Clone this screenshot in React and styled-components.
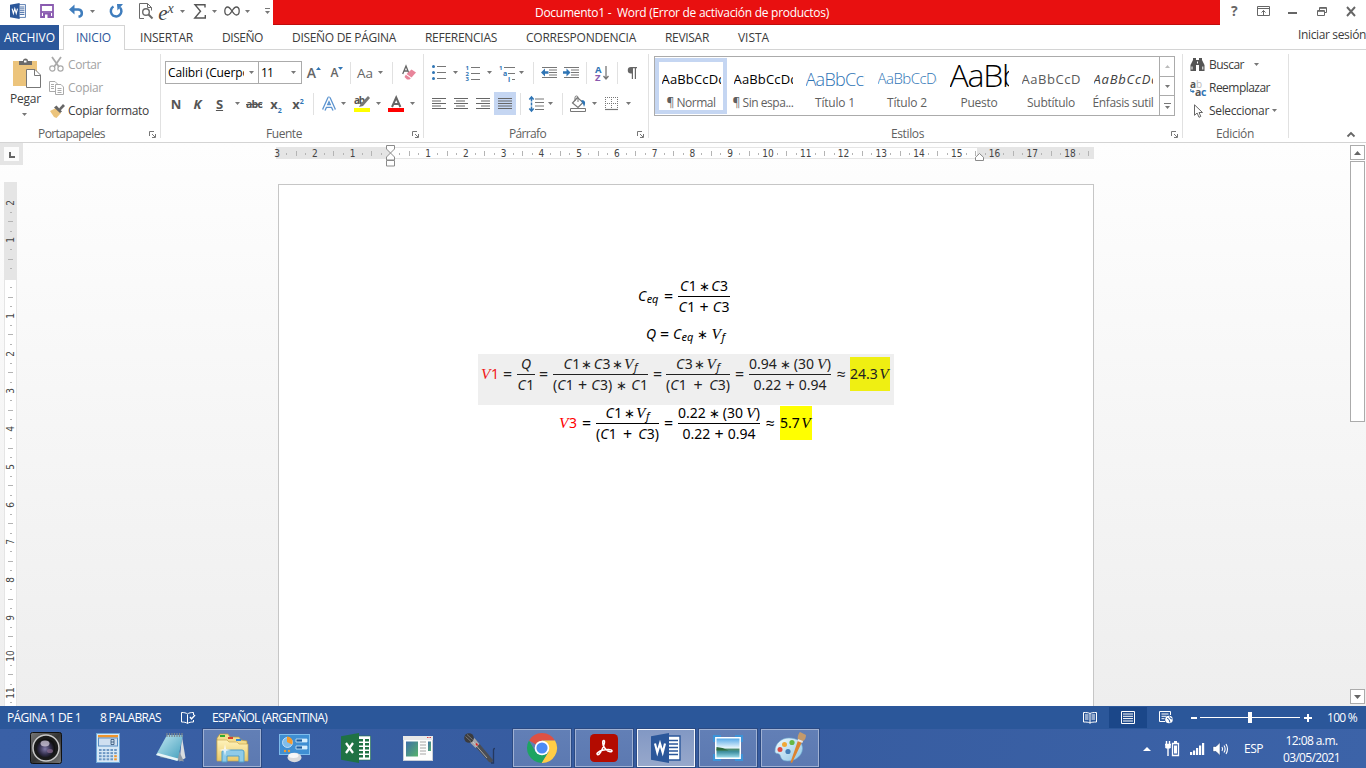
import React, { useLayoutEffect, useRef, useState } from "react";
import styled, { createGlobalStyle, css } from "styled-components";

const ui = `"Open Sans", "Noto Sans", sans-serif`;
const mathSerif = `"Liberation Serif", serif`;
const mathSans = `"Noto Sans", "Open Sans", sans-serif`;

const Global = createGlobalStyle`
  * { box-sizing: border-box; }
  body { margin: 0; background: #fff; font-family: ${ui}; font-size: 12px; color: #3c3c3c; overflow: hidden; }
  svg { display: block; flex: none; overflow: visible; }
`;

/* ---------- text that tracks itself to a given width ---------- */
const FitText = styled.span`
  display: block;
  flex: none;
  width: ${(p) => p.$w}px;
  white-space: pre;
  margin-left: ${(p) => p.$ml || 0}px;
  line-height: ${(p) => p.$lh || 16}px;
  color: ${(p) => p.$c || "inherit"};
  font-size: ${(p) => p.$s || 12}px;
  font-weight: ${(p) => p.$b || "inherit"};
`;
function Fit({ w, ml, lh, c, s, b, children }) {
  const ref = useRef(null);
  const [gap, setGap] = useState(0);
  const count = React.Children.toArray(children).join("").length;
  useLayoutEffect(() => {
    const natural = ref.current.getBoundingClientRect().width;
    setGap((w - natural) / count);
  }, [w, count]);
  return (
    <FitText $w={w} $ml={ml} $lh={lh} $c={c} $s={s} $b={b}>
      <span ref={ref} style={{ letterSpacing: gap }}>{children}</span>
    </FitText>
  );
}

/* ---------- shared small parts ---------- */
const Window = styled.div`
  width: 1366px;
  height: 768px;
  display: flex;
  flex-direction: column;
  overflow: hidden;
`;
const Cell = styled.div`
  flex: none;
  width: ${(p) => p.$w}px;
  height: ${(p) => p.$h || 23}px;
  margin-left: ${(p) => p.$ml || 0}px;
  background: ${(p) => (p.$on ? "#c5d6f2" : "transparent")};
  display: flex;
  align-items: center;
  justify-content: center;
`;
const VLine = styled.div`
  flex: none;
  width: 1px;
  height: 22px;
  margin-left: ${(p) => p.$ml || 0}px;
  background: #e1e1e1;
`;
const Caret = ({ c = "#777" }) => (
  <svg width="5" height="3" viewBox="0 0 5 3"><path d="M0 0h5L2.5 3z" fill={c} /></svg>
);
const Arrow = ({ w, ml }) => <Cell $w={w} $ml={ml}><Caret /></Cell>;

/* ---------- title bar ---------- */
const TitleBar = styled.header`
  height: 25px;
  display: flex;
  flex: none;
`;
const QuickAccess = styled.div`
  width: 273px;
  display: flex;
  align-items: center;
  padding: 0 0 3px 8px;
`;
const Caption = styled.div`
  width: 947px;
  background: #e81010;
  border-bottom: 1px solid #c00c0c;
  padding: 5px 0 0 262px;
`;
const Controls = styled.div`
  display: flex;
  align-items: center;
  padding-bottom: 3px;
`;

const WordMark = ({ size = 16 }) => (
  <svg width={size} height={size} viewBox="0 0 30 30">
    <path d="M16 3h13v24H16z" fill="#fff" stroke="#2b579a" strokeWidth="1.4" />
    <path d="M18 7.5h9M18 11h9M18 14.500h9M18 18h9M18 21.500h9" stroke="#2b579a" strokeWidth="1.6" />
    <path d="M0 3.300 18 0v30L0 26.700z" fill="#2b579a" />
    <path d="M4 10.500 6.300 19.500 9 10.500 11.700 19.500 14 10.500" fill="none" stroke="#fff" strokeWidth="2.100" />
  </svg>
);

function TopBar() {
  return (
    <TitleBar>
      <QuickAccess>
        <Cell $w={20}><WordMark /></Cell>
        <Cell $w={26} $ml={6}>
          <svg width="14" height="14" viewBox="0 0 14 14">
            <path d="M1 1h12v12H1z" fill="#fff" stroke="#8a5bb0" strokeWidth="1.800" />
            <path d="M1 8h12" fill="none" stroke="#8a5bb0" strokeWidth="1.800" />
            <path d="M3 9h8v4.500H3z" fill="#8a5bb0" /><path d="M5 10.500h2.500V14H5z" fill="#fff" />
          </svg>
        </Cell>
        <Cell $w={26} $ml={3}>
          <svg width="15" height="13" viewBox="0 0 15 13">
            <path d="M3 4.500h6.500a4 3.700 0 0 1 0 7.300" fill="none" stroke="#3f7dbd" strokeWidth="2.500" />
            <path d="M0 4.500 5.500-.5v10z" fill="#3f7dbd" />
          </svg>
        </Cell>
        <Arrow w={6} />
        <Cell $w={22} $ml={10}>
          <svg width="15" height="14" viewBox="0 0 15 14">
            <path d="M4.500 2.500A5.300 5.300 0 1 0 11 3.500" fill="none" stroke="#3f7dbd" strokeWidth="2.500" />
            <path d="M8 0h6L8.500 6.500z" fill="#3f7dbd" />
          </svg>
        </Cell>
        <Cell $w={18} $ml={10}>
          <svg width="14" height="16" viewBox="0 0 14 16" fill="none" stroke="#6a6a6a">
            <path d="M5 15.500H.5V.5h8l4 4v3M8.500.5v4h4" />
            <circle cx="7" cy="9" r="3.300" strokeWidth="1.400" /><path d="M9.500 11.500 13.500 15.500" strokeWidth="2" />
          </svg>
        </Cell>
        <Cell $w={22}><EulerText>e<sup>x</sup></EulerText></Cell>
        <Arrow w={6} ml={2} />
        <Cell $w={20} $ml={5}>
          <svg width="12" height="15" viewBox="0 0 12 15"><path d="M11 3.500V.8H1l5.500 6.500L.8 14h10.500v-3" fill="none" stroke="#555" strokeWidth="1.400" /></svg>
        </Cell>
        <Arrow w={6} ml={1} />
        <Cell $w={18} $ml={6}>
          <svg width="16" height="10" viewBox="0 0 16 10"><path d="M8 5C6 2 5 1 3.700 1 2 1 .8 2.700.8 5S2 9 3.700 9C5.500 9 6.500 7.500 8 5s2.500-4 4.300-4C14 1 15.200 2.700 15.200 5S14 9 12.300 9C11 9 10 8 8 5z" fill="none" stroke="#555" strokeWidth="1.300" /></svg>
        </Cell>
        <Arrow w={6} ml={3} />
        <Cell $w={12} $ml={11}>
          <svg width="5" height="6" viewBox="0 0 5 6"><path d="M0 .5h5" stroke="#777" /><path d="M0 3h5L2.500 6z" fill="#777" /></svg>
        </Cell>
      </QuickAccess>
      <Caption><Fit w={294} c="#fff">Documento1 -  Word (Error de activación de productos)</Fit></Caption>
      <Controls>
        <Cell $w={29}><Fit w={7} s={14} b={700} c="#666">?</Fit></Cell>
        <Cell $w={29}>
          <svg width="13" height="10" viewBox="0 0 13 10" fill="none" stroke="#666"><path d="M.5.500h12v9H.5zM.5 2.500h12M6.500 9V4.500M4.500 6.500l2-2 2 2" /></svg>
        </Cell>
        <Cell $w={29}><svg width="9" height="10"><path d="M0 7h9" stroke="#666" strokeWidth="2" /></svg></Cell>
        <Cell $w={29}>
          <svg width="10" height="9" viewBox="0 0 10 9" fill="none" stroke="#666"><path d="M2.500 3V.500h7v5H7.500M.5 3.500h7v5H.5zM2.500 1.300h7M.5 4.300h7" /></svg>
        </Cell>
        <Cell $w={29}><svg width="10" height="9" viewBox="0 0 10 9"><path d="M1 0l8 9M9 0 1 9" stroke="#666" strokeWidth="1.900" /></svg></Cell>
      </Controls>
    </TitleBar>
  );
}
const EulerText = styled.span`
  font: italic 21px/22px ${mathSerif};
  color: #444;
  padding-top: 4px;
  sup { font-size: 14px; line-height: 0; vertical-align: 7px; }
`;

/* ---------- tabs ---------- */
const TabBar = styled.nav`
  height: 25px;
  flex: none;
  display: flex;
  border-bottom: 1px solid #d4d4d4;
`;
const FileTab = styled.div`
  width: 59px;
  height: 25px;
  padding: 5px 0 0 4px;
  background: #2b579a;
`;
const ActiveTab = styled.div`
  width: 62px;
  height: 25px;
  margin: 0 15px 0 4px;
  padding: 4px 0 0 12px;
  border: 1px solid #d4d4d4;
  border-bottom: 0;
  background: #fff;
`;
const Tabs = styled.div`
  display: flex;
  gap: 29px;
  padding-top: 5px;
`;
const SignIn = styled.div`
  margin-left: auto;
  padding-top: 2px;
`;

/* ---------- ribbon ---------- */
const Ribbon = styled.section`
  height: 93px;
  flex: none;
  display: flex;
  border-bottom: 1px solid #d4d4d4;
`;
const Group = styled.div`
  width: ${(p) => p.$w}px;
  flex: none;
  display: flex;
  flex-direction: column;
`;
const GroupSep = styled.div`
  width: 1px;
  height: 84px;
  margin-top: 4px;
  background: #e1e1e1;
`;
const GroupBody = styled.div`
  height: 74px;
  display: flex;
  flex-direction: ${(p) => (p.$col ? "column" : "row")};
`;
const GroupFoot = styled.div`
  display: flex;
  height: 18px;
  align-items: center;
  justify-content: space-between;
  padding: 2px 4px 0 ${(p) => p.$pl}px;
  color: #5f5f5f;
`;
const Launcher = () => (
  <svg width="7" height="7" viewBox="0 0 7 7" fill="none" stroke="#777"><path d="M.5 5V.5H5M3 3l3 3M6.500 3v3.500H3" /></svg>
);
const Row = styled.div`
  display: flex;
  align-items: center;
  height: 23px;
  margin-top: ${(p) => p.$mt || 0}px;
  padding-left: ${(p) => p.$pl || 0}px;
`;
const Paste = styled.div`
  width: 49px;
  padding: 7px 0 0 10px;
`;
const PasteIcon = styled.div`
  padding: 0 0 3px 2px;
`;
const PasteCaret = styled.div`
  padding: 6px 0 0 12px;
`;
const Commands = styled.div`
  padding-top: ${(p) => p.$pt || 3}px;
`;
const Combo = styled.div`
  width: ${(p) => p.$w}px;
  height: 23px;
  margin-left: ${(p) => p.$ml || 0}px;
  border: 1px solid #ababab;
  display: flex;
  align-items: center;
  padding-left: 2px;
  color: #000;
  flex: none;
`;
const ComboClip = styled.div`
  width: ${(p) => p.$w}px;
  overflow: hidden;
`;
const Glyph = styled.span`
  font-weight: 700;
  font-size: ${(p) => p.$s || 13}px;
  line-height: 16px;
  color: #555;
  font-style: ${(p) => (p.$i ? "italic" : "normal")};
  text-decoration: ${(p) => p.$d || "none"};
  letter-spacing: ${(p) => p.$ls || 0}px;
  sub, sup { font-size: 7px; line-height: 0; color: #2f75b5; }
`;
const Letter = styled.span`
  font-size: ${(p) => p.$s}px;
  line-height: 16px;
  font-weight: 600;
  color: #666;
`;

const paraLines = { left: [14, 9, 14, 9, 14], mid: [14, 9, 14, 9, 14], right: [14, 9, 14, 9, 14], full: [14, 14, 14, 14, 14] };
const AlignIcon = ({ kind }) => (
  <svg width="14" height="11" viewBox="0 0 14 11" fill="#666">
    {paraLines[kind].map((w, i) => (
      <rect key={i} x={kind === "right" ? 14 - w : kind === "mid" ? Math.floor((14 - w) / 2) : 0} y={i * 2.5} width={w} height="1" />
    ))}
  </svg>
);
const svgText = { fontFamily: "Open Sans", fontWeight: 700, fill: "#2f75b5" };

function Clipboard() {
  return (
    <Group $w={160}>
      <GroupBody>
        <Paste>
          <PasteIcon>
            <svg width="29" height="31" viewBox="0 0 29 31">
              <path d="M1 4h24v25H1z" fill="#ecc47c" />
              <path d="M7 8V4h4a2.500 2.500 0 0 1 5 0h4v4z" fill="#6b6b6b" /><path d="M12 3.500h2.500v2H12z" fill="#fff" />
              <path d="M14.500 12.500h8.500l5.500 5.500v12.500h-14z" fill="#fff" stroke="#777" /><path d="M22.500 12.500v6h6" fill="none" stroke="#777" />
            </svg>
          </PasteIcon>
          <Fit w={31}>Pegar</Fit>
          <PasteCaret><Caret /></PasteCaret>
        </Paste>
        <Commands>
          <Row>
            <svg width="15" height="15" viewBox="0 0 15 15" fill="none" stroke="#aaa"><path d="M3 0 10 10M12 0 5 10" strokeWidth="1.800" /><circle cx="3.300" cy="11.500" r="2.600" strokeWidth="1.200" /><circle cx="11.500" cy="11.500" r="2.600" strokeWidth="1.200" /></svg>
            <Fit w={33} ml={4} c="#a3a3a3">Cortar</Fit>
          </Row>
          <Row>
            <svg width="15" height="14" viewBox="0 0 15 14" fill="#fff" stroke="#aaa"><path d="M.5.500H6L8.500 3v7.500h-8z" /><path d="M2 3.500h3M2 5.500h3M2 7.500h3" /><path d="M6.500 3.500H12L14.500 6v7.500h-8z" /><path d="M8.500 7.500h4M8.500 9.500h4M8.500 11.500h4" /></svg>
            <Fit w={35} ml={4} c="#a3a3a3">Copiar</Fit>
          </Row>
          <Row>
            <svg width="16" height="14" viewBox="0 0 16 14"><path d="M1 7 7 4l5 5-4.500 5L5 13z" fill="#ecc47c" /><path d="M5 3.500 7.500 1.500 13 7.500 11 9z" fill="#666" /><path d="M10 4.500 14 0l2 2-4.500 4.500z" fill="#666" /></svg>
            <Fit w={81} ml={3}>Copiar formato</Fit>
          </Row>
        </Commands>
      </GroupBody>
      <GroupFoot $pl={38}><Fit w={67}>Portapapeles</Fit><Launcher /></GroupFoot>
    </Group>
  );
}

function FontGroup() {
  return (
    <Group $w={262}>
      <GroupBody $col>
        <Row $mt={11} $pl={4}>
          <Combo $w={94}><ComboClip $w={77}><Fit w={85}>Calibri (Cuerpo)</Fit></ComboClip><Arrow w={14} /></Combo>
          <Combo $w={44} $ml={-1}><ComboClip $w={25}><Fit w={12}>11</Fit></ComboClip><Arrow w={16} /></Combo>
          <Cell $w={24}><Letter $s={14}>A</Letter><svg width="5" height="12"><path d="M0 3h5L2.500 0z" fill="#2f75b5" /></svg></Cell>
          <Cell $w={22}><Letter $s={12}>A</Letter><svg width="5" height="12"><path d="M0 0h5L2.500 3z" fill="#2f75b5" /></svg></Cell>
          <VLine $ml={2} />
          <Cell $w={22} $ml={3}><Fit w={16} s={13.5} c="#666">Aa</Fit></Cell>
          <Arrow w={9} />
          <VLine $ml={7} />
          <Cell $w={24} $ml={4}>
            <svg width="14" height="15" viewBox="0 0 14 15">
              <path d="M.7 9 4 1l3.200 8M2 6h4.300" fill="none" stroke="#666" strokeWidth="1.300" />
              <path d="M9.500 4.500 14 7.500 9.500 12.500 4.500 9z" fill="#e8849a" /><path d="M3.800 9.800 8.800 13.200 7.500 14.500H5L2.500 12z" fill="#e8849a" />
            </svg>
          </Cell>
        </Row>
        <Row $mt={8} $pl={4}>
          <Cell $w={22}><Glyph>N</Glyph></Cell>
          <Cell $w={21}><Glyph $i>K</Glyph></Cell>
          <Cell $w={23}><Glyph $d="underline">S</Glyph></Cell>
          <Arrow w={12} />
          <Cell $w={22}><Glyph $s={10.5} $d="line-through" $ls={-0.8}>abc</Glyph></Cell>
          <Cell $w={22}><Glyph>x<sub>2</sub></Glyph></Cell>
          <Cell $w={22}><Glyph>x<sup>2</sup></Glyph></Cell>
          <VLine $ml={4} />
          <Cell $w={22} $ml={4}>
            <svg width="14" height="14" viewBox="0 0 14 14"><path d="M1.800 13 7 1.500 12.200 13M4 9h6" fill="none" stroke="#5b93cf" strokeWidth="4" strokeLinejoin="round" /><path d="M1.800 13 7 1.500 12.200 13M4 9h6" fill="none" stroke="#fff" strokeWidth="1.400" /></svg>
          </Cell>
          <Arrow w={7} />
          <Cell $w={22} $ml={4}>
            <svg width="16" height="16" viewBox="0 0 16 16"><text x="0" y="8" fontSize="10" style={{ ...svgText, fill: "#555" }} textLength="11">ab</text><path d="M0 12h16v4H0z" fill="#ff0" /><path d="M14 0l2 2-7 8-4 1 1.500-3z" fill="#777" /></svg>
          </Cell>
          <Arrow w={11} />
          <Cell $w={24}>
            <svg width="16" height="16" viewBox="0 0 16 16"><path d="M4 11 8.200 1.500 12.400 11M5.500 8h5.500" fill="none" stroke="#666" strokeWidth="2" /><path d="M0 12h16v4H0z" fill="#f00" /></svg>
          </Cell>
          <Arrow w={9} />
        </Row>
      </GroupBody>
      <GroupFoot $pl={105}><Fit w={36}>Fuente</Fit><Launcher /></GroupFoot>
    </Group>
  );
}

const IndentIcon = ({ right }) => (
  <svg width="16" height="11" viewBox="0 0 16 11">
    <path d="M1 .5h15M8 3h8M8 5.500h8M8 8h8M1 10.500h15" stroke="#777" />
    {right ? <path d="M7.500 5.500 3.500 1.500v2.800H0v2.400h3.500v2.800z" fill="#2f75b5" /> : <path d="M0 5.500 4 1.500v2.800h3.500v2.400H4v2.800z" fill="#2f75b5" />}
  </svg>
);

function Paragraph() {
  return (
    <Group $w={224}>
      <GroupBody $col>
        <Row $mt={11} $pl={4}>
          <Cell $w={21}>
            <svg width="14" height="15" viewBox="0 0 14 15"><path d="M5 1.500h9M5 7.500h9M5 13.500h9" stroke="#777" /><circle cx="1.500" cy="1.500" r="1.500" fill="#2f75b5" /><circle cx="1.500" cy="7.500" r="1.500" fill="#2f75b5" /><circle cx="1.500" cy="13.500" r="1.500" fill="#2f75b5" /></svg>
          </Cell>
          <Arrow w={12} />
          <Cell $w={24}>
            <svg width="14" height="16" viewBox="0 0 14 16"><path d="M5 2.500h9M5 8.500h9M5 14.500h9" stroke="#777" /><text x="-.5" y="5" fontSize="6" style={svgText}>1</text><text x="-.5" y="10.500" fontSize="6" style={svgText}>2</text><text x="-.5" y="16" fontSize="6" style={svgText}>3</text></svg>
          </Cell>
          <Arrow w={9} />
          <Cell $w={25}>
            <svg width="16" height="16" viewBox="0 0 16 16"><path d="M5 2.500h11M9 8.500h7M13 14.500h3" stroke="#777" /><text x="0" y="5" fontSize="6" style={svgText}>1</text><text x="4" y="10.500" fontSize="7" style={svgText}>a</text><text x="9" y="16.500" fontSize="7" style={svgText}>i</text></svg>
          </Cell>
          <Arrow w={5} />
          <VLine $ml={9} />
          <Cell $w={22} $ml={4}><IndentIcon /></Cell>
          <Cell $w={22}><IndentIcon right /></Cell>
          <VLine $ml={4} />
          <Cell $w={22} $ml={4}>
            <svg width="14" height="16" viewBox="0 0 14 16"><text x="0" y="7.500" fontSize="9.500" style={svgText}>A</text><text x="0" y="16" fontSize="9.500" style={{ ...svgText, fill: "#8a5bb0" }}>Z</text><path d="M11 1v13M8.500 11l2.500 3 2.500-3" fill="none" stroke="#777" strokeWidth="1.300" /></svg>
          </Cell>
          <VLine $ml={4} />
          <Cell $w={22} $ml={3}>
            <svg width="10" height="12" viewBox="0 0 10 12"><path d="M4 0h6v1.200H9V12H7.800V1.200H6V12H4.800V6.500H4A3.200 3.200 0 0 1 4 0z" fill="#666" /></svg>
          </Cell>
        </Row>
        <Row $mt={8} $pl={4}>
          <Cell $w={22}><AlignIcon kind="left" /></Cell>
          <Cell $w={22}><AlignIcon kind="mid" /></Cell>
          <Cell $w={22}><AlignIcon kind="right" /></Cell>
          <Cell $w={22} $on><AlignIcon kind="full" /></Cell>
          <VLine $ml={4} />
          <Cell $w={22} $ml={4}>
            <svg width="15" height="16" viewBox="0 0 15 16"><path d="M6 3h9M6 6.500h9M6 10h9M6 13.500h9" stroke="#777" /><path d="M2.500 1v4.500M2.500 10.500V15M.3 3.500 2.500 1l2.200 2.500M.3 12.500 2.500 15l2.200-2.500M2.500 6.500v3" fill="none" stroke="#2f75b5" strokeWidth="1.500" /></svg>
          </Cell>
          <Arrow w={7} />
          <VLine $ml={8} />
          <Cell $w={22} $ml={4}>
            <svg width="16" height="16" viewBox="0 0 16 16" fill="none" stroke="#777"><path d="M7.500 1.500 2.500 7 8 11.500 13 6.500z" fill="#fff" strokeWidth="1.200" /><path d="M5 5V1.500A1.500 1.500 0 0 1 8 1.500V6" /><path d="M11.500 4c4 0 4.500 3 2.500 7-.5-2-1-4-2.500-5z" fill="#2f75b5" stroke="none" /><path d="M.5 12.500h15v3H.5z" fill="#fff" /></svg>
          </Cell>
          <Arrow w={11} />
          <Cell $w={22}>
            <svg width="13" height="13" viewBox="0 0 13 13" fill="none" stroke="#777"><path d="M.5 0v12M6.500 0v12M12.500 0v12M0 .5h13M0 6.500h13" strokeDasharray="1 1" /><path d="M0 12.500h13" strokeWidth="1.200" /></svg>
          </Cell>
          <Arrow w={13} />
        </Row>
      </GroupBody>
      <GroupFoot $pl={85}><Fit w={37}>Párrafo</Fit><Launcher /></GroupFoot>
    </Group>
  );
}

const Gallery = styled.div`
  display: flex;
  width: 521px;
  height: 60px;
  margin: 6px 0 0 5px;
  border: 1px solid #ababab;
`;
const StyleTile = styled.div`
  width: 72px;
  height: 56px;
  margin-top: 1px;
  flex: none;
  border: 4px solid ${(p) => (p.$on ? "#c5d6f2" : "transparent")};
  padding: 0 2px;
  display: flex;
  flex-direction: column;
  align-items: center;
`;
const Sample = styled.div`
  width: 59px;
  height: 31px;
  margin-top: 2px;
  overflow: hidden;
  display: flex;
  align-items: flex-start;
  padding-top: ${(p) => p.$pt}px;
  font-style: ${(p) => (p.$i ? "italic" : "normal")};
  flex: none;
`;
const GalleryScroll = styled.div`
  width: 15px;
  border-left: 1px solid #ababab;
  display: flex;
  flex-direction: column;
`;
const ScrollStep = styled.div`
  flex: 1;
  display: flex;
  align-items: center;
  justify-content: center;
  & + & { border-top: 1px solid #ababab; }
`;
const styleList = [
  { name: "¶ Normal", nw: 49, w: 65, s: 13, c: "#000", pt: 7, on: true },
  { name: "¶ Sin espa...", nw: 61, w: 65, s: 13, c: "#000", pt: 7 },
  { name: "Título 1", nw: 40, w: 80, s: 18, c: "#2e74b5", pt: 7, b: 300 },
  { name: "Título 2", nw: 40, w: 67, s: 15, c: "#2e74b5", pt: 6, b: 300 },
  { name: "Puesto", nw: 37, w: 142, s: 32, c: "#000", pt: 3, b: 300 },
  { name: "Subtítulo", nw: 48, w: 68, s: 13, c: "#5a5a5a", pt: 7 },
  { name: "Énfasis sutil", nw: 61, w: 66, s: 13, c: "#404040", pt: 7, i: true },
];

function Styles() {
  return (
    <Group $w={533}>
      <GroupBody>
        <Gallery>
          {styleList.map((t) => (
            <StyleTile key={t.name} $on={t.on}>
              <Sample $pt={t.pt} $i={t.i}><Fit w={t.w} s={t.s} c={t.c} b={t.b}>AaBbCcDd</Fit></Sample>
              <Fit w={t.nw} c="#5f5f5f">{t.name}</Fit>
            </StyleTile>
          ))}
          <GalleryScroll>
            <ScrollStep><svg width="5" height="3"><path d="M0 3h5L2.500 0z" fill="#bbb" /></svg></ScrollStep>
            <ScrollStep><Caret /></ScrollStep>
            <ScrollStep><svg width="7" height="6"><path d="M0 .5h7" stroke="#777" /><path d="M1 3h5L3.500 6z" fill="#777" /></svg></ScrollStep>
          </GalleryScroll>
        </Gallery>
      </GroupBody>
      <GroupFoot $pl={242}><Fit w={33}>Estilos</Fit><Launcher /></GroupFoot>
    </Group>
  );
}

function Editing() {
  return (
    <Group $w={105}>
      <GroupBody>
        <Commands>
          <Row $pl={7}>
            <svg width="15" height="13" viewBox="0 0 15 13" fill="#555"><path d="M3 0h3v2h3V0h3v2l2.500 5v6H9V7H6v6H.5V7L3 2z" /><path d="M2 8.500v3M12.800 8.500v3M7.500 3.500v2" stroke="#fff" /></svg>
            <Fit w={35} ml={4}>Buscar</Fit><Arrow w={5} ml={10} />
          </Row>
          <Row $pl={7}>
            <svg width="16" height="16" viewBox="0 0 16 16"><text x="0" y="7.500" fontSize="10" style={{ ...svgText, fill: "#555" }}>a</text><text x="6" y="7.500" fontSize="10" style={{ ...svgText, fill: "#bbb", fontWeight: 400 }}>b</text><text x="5" y="15.500" fontSize="10.500" style={{ ...svgText, fill: "#555" }}>a</text><text x="11" y="15.500" fontSize="10.500" style={svgText}>c</text><path d="M.8 9v2.500H4M2.500 10 4 11.500 2.500 13" fill="none" stroke="#2f75b5" /></svg>
            <Fit w={61} ml={3}>Reemplazar</Fit>
          </Row>
          <Row $pl={11}>
            <svg width="9" height="14" viewBox="0 0 9 14"><path d="M.5.8v10.500l2.600-2.300L5 13.300l1.800-.9L5 8.500h3.500z" fill="#fff" stroke="#666" /></svg>
            <Fit w={60} ml={6}>Seleccionar</Fit><Arrow w={5} ml={3} />
          </Row>
        </Commands>
      </GroupBody>
      <GroupFoot $pl={33}><Fit w={38}>Edición</Fit></GroupFoot>
    </Group>
  );
}
const Collapse = styled.div`
  margin-left: auto;
  width: 19px;
  padding-top: 82px;
`;

/* ---------- document area ---------- */
const Work = styled.main`
  height: 563px;
  flex: none;
  display: flex;
  background: linear-gradient(#fefefe, #eeeeee);
`;
const LeftRail = styled.div`
  width: 276px;
  flex: none;
`;
const TabCorner = styled.div`
  width: 23px;
  height: 22px;
  background: #e5e5e5;
  padding: 4px;
`;
const TabType = styled.div`
  width: 15px;
  height: 14px;
  background: #fcfcfc;
  padding: 5px 0 0 5px;
`;
const VRuler = styled.div`
  width: 13px;
  height: 524px;
  margin: 17px 0 0 4px;
  padding-top: 16px;
  border: solid #e5e5e5;
  border-width: 0 1px;
  background: linear-gradient(#e5e5e5 98px, #fff 98px);
  overflow: hidden;
`;
const rulerFont = `"DejaVu Sans Condensed", "DejaVu Sans", sans-serif`;
const VMark = styled.div`
  height: 9.45px;
  display: flex;
  align-items: center;
  justify-content: center;
  font: 10px/10px ${rulerFont};
  color: #444;
  span { transform: rotate(-90deg); }
`;
const Tick = styled.i`
  background: #b4b4b4;
  ${(p) => p.$v
    ? css`width: ${p.$long ? 5 : 2}px; height: 1px;`
    : css`width: 1px; height: ${p.$long ? 5 : 2}px;`}
`;
const Center = styled.div`
  width: 1074px;
  padding-top: 4px;
  flex: none;
`;
const HRuler = styled.div`
  width: 818px;
  height: 12px;
  position: relative;
  border: solid #e5e5e5;
  border-width: 1px 0;
  background: linear-gradient(90deg, #e5e5e5 114px, #fff 114px, #fff 701px, #e5e5e5 701px);
`;
const HMarks = styled.div`
  display: flex;
  margin-left: -3.500px;
`;
const HMark = styled.div`
  width: 9.45px;
  height: 11px;
  flex: none;
  display: flex;
  align-items: center;
  justify-content: center;
  font: 10px/11px ${rulerFont};
  color: #444;
`;
const Marker = styled.div`
  position: absolute;
  left: ${(p) => p.$x}px;
  top: ${(p) => p.$y}px;
`;
const Page = styled.article`
  width: 816px;
  height: 522px;
  margin: 25px 0 0 2px;
  border: 1px solid #c6c6c6;
  border-bottom: 0;
  background: #fff;
  display: flex;
  flex-direction: column;
  padding-top: 92px;
`;
const ScrollBar = styled.div`
  width: 15px;
  padding-top: 2px;
  display: flex;
  flex-direction: column;
`;
const ScrollBtn = styled.div`
  height: 15px;
  border: 1px solid #ababab;
  background: #fff;
  display: flex;
  align-items: center;
  justify-content: center;
`;
const Thumb = styled.div`
  height: 261px;
  margin: 1px 0 267px;
  border: 1px solid #ababab;
  background: #fff;
`;

/* equations */
const Eq = styled.div`
  display: flex;
  align-items: flex-start;
  flex: none;
  height: ${(p) => p.$h}px;
  margin: ${(p) => p.$mt || 0}px 0 0 ${(p) => p.$ml}px;
  padding: ${(p) => p.$pt || 0}px 0 0 ${(p) => p.$pl || 0}px;
  width: ${(p) => p.$w}px;
  background: ${(p) => (p.$shade ? "#efefef" : "transparent")};
  font-family: ${mathSans};
  color: ${(p) => (p.$shade ? "#222" : "#000")};
`;
const Term = styled.div`
  margin: ${(p) => (p.$flat ? 0 : 10)}px 0 0 ${(p) => p.$ml || 0}px;
`;
const Frac = styled.div`
  width: ${(p) => p.$w}px;
  margin-left: ${(p) => p.$ml}px;
  flex: none;
  display: flex;
  flex-direction: column;
  align-items: center;
`;
const Bar = styled.div`
  width: 100%;
  height: 1px;
  margin: 1px 0;
  background: currentColor;
`;
const Mark = styled.div`
  width: ${(p) => p.$w}px;
  height: 34px;
  margin: ${(p) => p.$mt}px 0 0 ${(p) => p.$ml}px;
  padding-top: 8px;
  background: ${(p) => p.$bg};
`;
const Line = styled.div`
  width: ${(p) => p.$w}px;
  height: 18px;
  display: flex;
  white-space: pre;
  font-size: 14px;
  line-height: 18px;
  color: ${(p) => p.$c || "inherit"};
`;
const Var = styled.i`
  font-style: italic;
  letter-spacing: ${(p) => (p.$tight ? 0 : 0.4)}px;
  font-family: ${(p) => (p.$serif ? mathSerif : "inherit")};
  font-size: ${(p) => (p.$serif ? 15.5 : 14)}px;
`;
const Sub = styled.i`
  font-size: 11px;
  line-height: 24px;
`;
const Op = styled.span`
  margin: 0 auto;
  font-size: ${(p) => (p.$star ? 13 : 16)}px;
`;
const Gap = styled.span`
  width: 3px;
`;
/* letters become italic, operators take up the slack, "_xx" is a subscript */
const tokens = (src) => src.match(/_[a-z]+|\s+|[\d.()]+|[^\s_]/g) || [];
function M({ w, c, children }) {
  return (
    <Line $w={w} $c={c}>
      {tokens(children).map((t, i) => {
        if (t[0] === "_") return <Sub key={i}>{t.slice(1)}</Sub>;
        if (/^\s+$/.test(t)) return <Gap key={i} />;
        if (/[=+∗≈]/.test(t)) return <Op key={i} $star={t === "∗"}>{t}</Op>;
        return /[A-Za-z]/.test(t) ? <Var key={i} $serif={t === "V"}>{t}</Var> : <span key={i}>{t}</span>;
      })}
    </Line>
  );
}
const F = ({ w, ml = 4, n, nw, d, dw }) => (
  <Frac $w={w} $ml={ml}><M w={nw}>{n}</M><Bar /><M w={dw || w}>{d}</M></Frac>
);
const T = ({ w, ml, c, flat, children }) => <Term $ml={ml} $flat={flat}><M w={w} c={c}>{children}</M></Term>;

const hSteps = Array.from({ length: 87 }, (_, i) => i - 12);
const vSteps = Array.from({ length: 54 }, (_, i) => i - 8);

function Document() {
  return (
    <Work>
      <LeftRail>
        <TabCorner><TabType><svg width="6" height="6"><path d="M1 0v5h5" fill="none" stroke="#666" strokeWidth="2" /></svg></TabType></TabCorner>
        <VRuler>
          {vSteps.map((n) => (
            <VMark key={n}>{n === 0 ? null : n % 4 === 0 ? <span>{Math.abs(n / 4)}</span> : <Tick $v $long={n % 2 === 0} />}</VMark>
          ))}
        </VRuler>
      </LeftRail>
      <Center>
        <HRuler>
          <HMarks>
            {hSteps.map((n) => (
              <HMark key={n}>{n === 0 ? null : n % 4 === 0 ? <span>{Math.abs(n / 4)}</span> : <Tick $long={n % 2 === 0} />}</HMark>
            ))}
          </HMarks>
          <Marker $x={110} $y={-3}>
            <svg width="9" height="22" viewBox="0 0 9 22" fill="#fff" stroke="#8a8a8a"><path d="M.5.500h8V4L4.500 8 .5 4z" /><path d="M4.500 8 8.500 12v3h-8v-3z" /><path d="M.5 15.500h8v5.500h-8z" /></svg>
          </Marker>
          <Marker $x={699} $y={5}>
            <svg width="9" height="8" viewBox="0 0 9 8"><path d="M4.500.500 8.500 4.300V7.500h-8V4.300z" fill="#fff" stroke="#8a8a8a" /></svg>
          </Marker>
        </HRuler>
        <Page>
          <Eq $h={46} $ml={359} $w={94}>
            <T w={22}>C_eq</T><T w={11} ml={3}>=</T><F w={52} nw={48} n="C1∗C3" d="C1+C3" dw={51} />
          </Eq>
          <Eq $h={30} $mt={2} $ml={367} $w={82}><T flat w={79}>Q=C_eq∗V_f</T></Eq>
          <Eq $h={51} $mt={-1} $ml={199} $w={416} $pt={1} $pl={3} $shade>
            <T w={17} c="#f01818">V1</T><T w={11} ml={4}>=</T>
            <F w={18} ml={4} nw={10} n="Q" d="C1" dw={17} /><T w={11} ml={3}>=</T>
            <F w={95} nw={74} n="C1∗C3∗V_f" d="(C1+C3)∗C1" /><T w={11} ml={4}>=</T>
            <F w={64} ml={3} nw={44} n="C3∗V_f" d="(C1+C3)" /><T w={11} ml={4}>=</T>
            <F w={82} nw={82} n="0.94∗(30 V)" d="0.22+0.94" dw={73} /><T w={10} ml={5}>≈</T>
            <Mark $w={40} $ml={4} $mt={2} $bg="#efef12"><M w={39}>24.3 V</M></Mark>
          </Eq>
          <Eq $h={40} $mt={-1} $ml={280} $w={260}>
            <T w={17} c="#f00">V3</T><T w={11} ml={5}>=</T>
            <F w={63} nw={44} n="C1∗V_f" d="(C1+C3)" /><T w={11} ml={4}>=</T>
            <F w={82} nw={82} n="0.22∗(30 V)" d="0.22+0.94" dw={73} /><T w={10} ml={5}>≈</T>
            <Mark $w={32} $ml={5} $mt={2} $bg="#ff0"><M w={31}>5.7 V</M></Mark>
          </Eq>
        </Page>
      </Center>
      <ScrollBar>
        <ScrollBtn><svg width="7" height="4"><path d="M0 4h7L3.500 0z" fill="#666" /></svg></ScrollBtn>
        <Thumb />
        <ScrollBtn><svg width="7" height="4"><path d="M0 0h7L3.500 4z" fill="#666" /></svg></ScrollBtn>
      </ScrollBar>
    </Work>
  );
}

/* ---------- status bar ---------- */
const Status = styled.footer`
  height: 23px;
  flex: none;
  display: flex;
  align-items: center;
  padding: 0 9px 0 7px;
  background: #2b579a;
  color: #fff;
`;
const Push = styled.div`
  margin-left: auto;
  display: flex;
  align-items: center;
`;
const ViewBtn = styled.div`
  width: 38px;
  height: 21px;
  background: ${(p) => (p.$on ? "#1b4789" : "transparent")};
  display: flex;
  align-items: center;
  justify-content: center;
`;
function StatusBar() {
  return (
    <Status>
      <Fit w={74}>PÁGINA 1 DE 1</Fit>
      <Fit w={61} ml={19}>8 PALABRAS</Fit>
      <Cell $w={14} $ml={20}>
        <svg width="14" height="12" viewBox="0 0 14 12" fill="none" stroke="#fff"><path d="M6.500 2.500V11.500M6.500 2C5 .8 3 .5.500.500v9.500c2.500 0 4.500.300 6 1.500 1.500-1.200 3.500-1.500 6-1.500V8M6.500 2C8 .8 10 .5 12.500.500V3" /><path d="M9 5l1.500 2L14 3" strokeWidth="1.400" /></svg>
      </Cell>
      <Fit w={115} ml={17}>ESPAÑOL (ARGENTINA)</Fit>
      <Push>
        <ViewBtn>
          <svg width="14" height="12" viewBox="0 0 14 12" fill="none" stroke="#fff"><path d="M7 1.500v10M7 1.500C5.500.5 3 .5.500.500v9.500c2.500 0 5 0 6.500 1 1.500-1 4-1 6.500-1V.5C11 .5 8.500.5 7 1.500M2 3h3.500M2 5h3.500M2 7h3.500M8.500 3H12M8.500 5H12M8.500 7H12" /></svg>
        </ViewBtn>
        <ViewBtn $on>
          <svg width="14" height="13" viewBox="0 0 14 13" fill="none" stroke="#fff"><path d="M.5.500h13v12H.5zM2 3h10M2 5.300h10M2 7.600h10M2 10h10" /></svg>
        </ViewBtn>
        <ViewBtn>
          <svg width="14" height="13" viewBox="0 0 14 13" fill="none" stroke="#fff"><path d="M6 10.500H.5V.5h11V4M2.500 3h7M2.500 5.300h5M2.500 7.700h3" /><circle cx="10" cy="8.500" r="3.800" fill="#fff" stroke="none" /><path d="M8 7l2 1.500 1 3M10.500 5.500l1 2 2 .500" stroke="#2b579a" /></svg>
        </ViewBtn>
        <Cell $w={7} $ml={5}><svg width="6" height="2"><path d="M0 1h6" stroke="#fff" strokeWidth="2" /></svg></Cell>
        <Cell $w={100} $ml={3}><svg width="100" height="11"><path d="M0 5.500h100" stroke="#fff" /><path d="M48 0h4v11h-4z" fill="#fff" /></svg></Cell>
        <Cell $w={8} $ml={4}><svg width="8" height="8"><path d="M0 4h8M4 0v8" stroke="#fff" strokeWidth="2" /></svg></Cell>
        <Fit w={30} ml={15}>100 %</Fit>
      </Push>
    </Status>
  );
}

/* ---------- taskbar ---------- */
const TaskBar = styled.div`
  height: 39px;
  flex: none;
  display: flex;
  gap: 4px;
  padding-left: 17px;
  background: linear-gradient(100deg, #3a60a6, #365b9f 50%, #3c63a8);
  color: #fff;
`;
const Task = styled.div`
  width: 58px;
  height: 38px;
  flex: none;
  display: flex;
  align-items: center;
  justify-content: center;
  ${(p) => p.$open && css`
    background: linear-gradient(#627fb6, #5c79b1);
    border: 1px solid #a0b1d3;
    box-shadow: 0 0 0 1px #2b4a83;
  `}
  ${(p) => p.$active && css`
    background: linear-gradient(#8298c4, #97a8cb);
    border: 1px solid #f4f6fb;
    box-shadow: 0 0 0 1px #2b4a83;
  `}
`;
const Tray = styled.div`
  margin-left: auto;
  display: flex;
  align-items: center;
  width: 223px;
`;
const Clock = styled.div`
  display: flex;
  flex-direction: column;
  align-items: center;
  margin-left: 20px;
`;

const Camera = () => (
  <svg width="32" height="32" viewBox="0 0 32 32">
    <defs><linearGradient id="cam" x2="1" y2="1"><stop stopColor="#777" /><stop offset=".5" stopColor="#333" /><stop offset="1" stopColor="#777" /></linearGradient>
      <radialGradient id="lens" cx=".45" cy=".55"><stop stopColor="#8079a8" /><stop offset=".6" stopColor="#332f4d" /><stop offset="1" stopColor="#111" /></radialGradient></defs>
    <rect x=".5" y=".5" width="31" height="31" rx="2" fill="url(#cam)" stroke="#111" />
    <circle cx="16" cy="16" r="13" fill="#1a1a1a" stroke="#c8c8c8" strokeWidth="1.500" /><circle cx="16" cy="16" r="9.500" fill="url(#lens)" />
    <ellipse cx="15" cy="11.500" rx="4.500" ry="3" fill="#ddd6e5" opacity=".7" /><ellipse cx="20" cy="19" rx="3" ry="2" fill="#8a6a8d" opacity=".7" />
  </svg>
);
const Calc = () => (
  <svg width="24" height="30" viewBox="0 0 24 30">
    <rect x=".5" y=".5" width="23" height="29" fill="#d7e8f6" stroke="#6fa7d6" /><path d="M2 2h20v2.500H2z" fill="#f0952b" />
    <rect x="2.500" y="5" width="19" height="8" fill="#cfdff0" stroke="#5a8fc4" /><path d="M15 6.500h3v5h-3zM15 9h3" fill="none" stroke="#2c4e73" strokeWidth=".8" />
    {[0, 1, 2, 3].map((r) => [0, 1, 2, 3, 4].map((c) => <rect key={r + "-" + c} x={3 + c * 3.800} y={16 + r * 3.100} width="2.600" height="2" fill={c === 4 && r > 1 ? "#f0952b" : "#6d97c4"} />))}
  </svg>
);
const Notepad = () => (
  <svg width="31" height="30" viewBox="0 0 31 30">
    <defs><linearGradient id="pad" x2="1" y2="1"><stop stopColor="#c5e9f3" /><stop offset="1" stopColor="#3d9cba" /></linearGradient></defs>
    <path d="M27 4l3.500 21-6 3.500z" fill="#d9dde0" /><path d="M22 14l7 14.500L4 24z" fill="#8c98a5" /><path d="M12 2h16L22.500 28 1 22z" fill="url(#pad)" /><path d="M1 22 22.500 28l.6-2.500L3 20z" fill="#e9f4f7" />
    <path d="M12 0v4M14.500 0v4M17 0v4M19.500 0v4M22 0v4M24.500 0v4M27 0v4" stroke="#7c878f" strokeWidth="1.200" />
  </svg>
);
const Folder = () => (
  <svg width="33" height="30" viewBox="0 0 33 30">
    <defs><linearGradient id="fold" x2="0" y2="1"><stop stopColor="#fff3bb" /><stop offset="1" stopColor="#e9c96a" /></linearGradient></defs>
    <path d="M1 27V5l3-4h8l2 3h9l2 3 6 1v19z" fill="#f3dc8c" stroke="#b89840" strokeWidth=".7" />
    <path d="M4 2h5v2H4z" fill="#2faa2f" /><path d="M12 4h5v2h-5z" fill="#d7402c" /><path d="M20 6h5v2h-5z" fill="#2f86d7" />
    <path d="M1 28V7h10l2 2h8l2 2h9v17z" fill="url(#fold)" stroke="#c7a850" strokeWidth=".7" />
    <path d="M6 29V19q0-2 2-2h18q2 0 2 2v10h-5v-6H11v6z" fill="#8fcbe8" stroke="#4f9dc8" /><path d="M9 11l1 5 5 1-5 1-1 5-1-5-5-1 5-1z" fill="#fff" opacity=".8" />
  </svg>
);
const Panel = () => (
  <svg width="31" height="28" viewBox="0 0 31 28">
    <rect x=".5" y=".5" width="30" height="20" fill="#3f8fd3" stroke="#7ebcec" /><circle cx="8.500" cy="8.500" r="5" fill="#7fbdea" stroke="#e9f5fd" strokeWidth=".7" /><path d="M8 8V2.500a5.500 5.500 0 0 1 5 8z" fill="#f39a2d" />
    <path d="M17 5h11v3H17zM17 12h11v3H17z" fill="#1d5d9e" stroke="#cfe8fa" strokeWidth=".8" /><path d="M23 5h5v3h-5zM23 12h5v3h-5z" fill="#d5eefd" /><circle cx="6" cy="17" r="1.200" fill="#f39a2d" /><circle cx="10" cy="17" r="1.200" fill="#f39a2d" />
    <ellipse cx="15.500" cy="23.500" rx="7" ry="4.700" fill="#d8dadd" /><ellipse cx="14.500" cy="21.500" rx="5" ry="2.500" fill="#f6f7f8" />
  </svg>
);
const Excel = () => (
  <svg width="30" height="30" viewBox="0 0 30 30">
    <path d="M16 3h13.500v24H16z" fill="#fff" stroke="#1f7244" strokeWidth=".6" /><path d="M18 6h4v2.500h-4zM24 6h4v2.500h-4zM18 10h4v2.500h-4zM24 10h4v2.500h-4zM18 14h4v2.500h-4zM24 14h4v2.500h-4zM18 18h4v2.500h-4zM24 18h4v2.500h-4zM18 22h4v2.500h-4zM24 22h4v2.500h-4z" fill="#1f7244" />
    <path d="M0 3.300 18 0v30L0 26.700z" fill="#1f7244" /><path d="M5 10l7 10M12 10 5 20" stroke="#fff" strokeWidth="2.200" />
  </svg>
);
const AppWin = () => (
  <svg width="30" height="25" viewBox="0 0 30 25">
    <defs><linearGradient id="aw" x2="1" y2="1"><stop stopColor="#3d6ea8" /><stop offset="1" stopColor="#57b36a" /></linearGradient></defs>
    <rect x=".5" y=".5" width="29" height="24" fill="#fdfdfd" stroke="#c9ced6" /><path d="M0 0h30v4H0z" fill="#e8e8e8" /><path d="M24 1.500h1.500M26.500 1.500H28" stroke="#d44" /><path d="M3 5.500h12v15H3z" fill="url(#aw)" /><path d="M17 6h6M17 9h6M17 12h6M17 15h6M17 18h6" stroke="#c2c2c2" strokeWidth="1.500" /><path d="M25 5.500h3V15h-3z" fill="url(#aw)" />
  </svg>
);
const Mic = () => (
  <svg width="32" height="31" viewBox="0 0 32 31">
    <path d="M7 9l4-3.500L29 27l-1 3-3-1z" fill="#4a4d53" /><path d="M6 9.500 10.500 5l5 6-4 4z" fill="#a5a7ab" /><path d="M9 9l14 16" stroke="#ddd" strokeWidth="1" opacity=".6" /><path d="M12 10.500l1.500 2" stroke="#d22" strokeWidth="1.600" />
    <circle cx="5" cy="5" r="4.800" fill="#3b3b3d" /><path d="M1.500 3.500 7 8.500M3 1.500l5.500 5" stroke="#777" /><path d="M27 30h2.500V16.500q0-1 1.500-1" fill="none" stroke="#24385f" strokeWidth="1.300" />
  </svg>
);
const Chrome = () => (
  <svg width="30" height="30" viewBox="0 0 30 30">
    <path d="M15 15 2 7.500A15 15 0 0 1 28 7.500H15z" fill="#dd5144" /><path d="M15 7.500h13A15 15 0 0 1 14.500 30l7-11.200z" fill="#ffcd46" /><path d="M2 7.500A15 15 0 0 0 14.500 30l7-11.500L15 22 8.500 18.800z" fill="#1da462" />
    <circle cx="15" cy="15" r="7.300" fill="#fff" /><circle cx="15" cy="15" r="5.600" fill="#4c8bf5" />
  </svg>
);
const Acrobat = () => (
  <svg width="28" height="28" viewBox="0 0 28 28">
    <rect width="28" height="28" rx="4.500" fill="#b30b00" /><path d="M7.500 20.500c-2-1 2-3.500 5-4.200 3.500-.9 9-1.300 9.500.4.400 1.700-3.500 1.500-6-1.200-2.300-2.500-3.700-5.800-3.200-8.200.500-1.500 2-1 1.700 1-.3 3-2.500 7.500-4 10-.9 1.500-2 2.700-3 2.200z" fill="none" stroke="#fff" strokeWidth="1.500" />
  </svg>
);
const Picture = () => (
  <svg width="30" height="26" viewBox="0 0 30 26">
    <defs><linearGradient id="sky" x2="0" y2="1"><stop stopColor="#58a9e8" /><stop offset=".5" stopColor="#e8f6fc" /><stop offset=".56" stopColor="#4c8a6b" /><stop offset=".7" stopColor="#3f8fa0" /><stop offset="1" stopColor="#9bdaea" /></linearGradient></defs>
    <rect x="2" y="2" width="26" height="22" fill="#fff" /><rect x="3.500" y="3.500" width="23" height="19" fill="url(#sky)" /><path d="M3.500 12q6 0 12 3.500h-12z" fill="#2f6a3f" />
    <path d="M1 7V1h7M22 1h7v6M29 19v6h-7M8 25H1v-6" fill="none" stroke="#3c93d8" strokeWidth="2.200" />
  </svg>
);
const Paint = () => (
  <svg width="32" height="32" viewBox="0 0 32 32">
    <defs><linearGradient id="pal" x2="1" y2="1"><stop stopColor="#f2fafd" /><stop offset="1" stopColor="#8fc7e6" /></linearGradient></defs>
    <path d="M15 6C7 6 1 12 1 19c0 3 2 2 4 3s1 5 5 6.500c7 2 18-2 18.500-12C28.500 10 23 6 15 6z" fill="url(#pal)" stroke="#70aed4" strokeWidth=".6" />
    <circle cx="6" cy="17.500" r="2.500" fill="#dd4b44" /><circle cx="10.500" cy="12.500" r="2.500" fill="#f0a838" /><circle cx="18" cy="10.500" r="2.600" fill="#66b845" /><circle cx="14" cy="19.500" r="2.600" fill="#447fb8" />
    <path d="M29 8 18 31l-1.500-.8L24.500 7z" fill="#dc8430" /><path d="M24 8c-1-4 1-7 2-8l6 3c0 3-1 5-4 7z" fill="#c49a6b" /><path d="M24 7l5 2-.6 2-5-2z" fill="#e6e6e6" />
  </svg>
);
const apps = [
  { icon: <Camera /> }, { icon: <Calc /> }, { icon: <Notepad /> }, { icon: <Folder />, open: true }, { icon: <Panel /> }, { icon: <Excel /> },
  { icon: <AppWin /> }, { icon: <Mic /> }, { icon: <Chrome />, open: true }, { icon: <Acrobat />, open: true }, { icon: <WordMark size={30} />, active: true },
  { icon: <Picture />, open: true }, { icon: <Paint />, open: true },
];

function Desktop() {
  return (
    <TaskBar>
      {apps.map((a, i) => <Task key={i} $open={a.open} $active={a.active}>{a.icon}</Task>)}
      <Tray>
        <svg width="8" height="4"><path d="M0 4h8L4 0z" fill="#fff" /></svg>
        <Cell $w={16} $ml={13}>
          <svg width="15" height="15" viewBox="0 0 15 15" fill="none" stroke="#fff"><path d="M1.500 0v3M4.500 0v3M0 3.500h6M3 6v9" strokeWidth="1.400" /><path d="M.8 4h4.400v3H.8z" fill="#fff" /><path d="M7.500 2.500h6v12h-6z" strokeWidth="1.300" /><path d="M9 4.500h3v8H9z" fill="#fff" stroke="none" /><path d="M9 1h3" strokeWidth="2" /></svg>
        </Cell>
        <Cell $w={16} $ml={9}>
          <svg width="15" height="12" viewBox="0 0 15 12" fill="#fff"><path d="M0 9h2.200v3H0zM3 7.500h2.200V12H3zM6 5h2.200v7H6zM9 2.500h2.200V12H9zM12 0h2.200v12H12z" /></svg>
        </Cell>
        <Cell $w={16} $ml={7}>
          <svg width="15" height="14" viewBox="0 0 15 14"><path d="M0 4.500h3L7 .5v13l-4-4H0z" fill="#fff" stroke="#1f3d73" strokeWidth=".5" /><path d="M9 5q1.200 2 0 4M11 3.500q2.200 3.500 0 7M13 2q3 5 0 10" fill="none" stroke="#fff" strokeWidth="1.100" /></svg>
        </Cell>
        <Fit w={19} ml={16}>ESP</Fit>
        <Clock><Fit w={52} lh={17}>12:08 a.m.</Fit><Fit w={57} lh={17}>03/05/2021</Fit></Clock>
      </Tray>
    </TaskBar>
  );
}

export default function App() {
  return (
    <Window>
      <Global />
      <TopBar />
      <TabBar>
        <FileTab><Fit w={51} c="#fff">ARCHIVO</Fit></FileTab>
        <ActiveTab><Fit w={35} c="#2b579a">INICIO</Fit></ActiveTab>
        <Tabs>
          <Fit w={53}>INSERTAR</Fit><Fit w={41}>DISEÑO</Fit><Fit w={104}>DISEÑO DE PÁGINA</Fit><Fit w={72}>REFERENCIAS</Fit>
          <Fit w={110}>CORRESPONDENCIA</Fit><Fit w={44}>REVISAR</Fit><Fit w={31}>VISTA</Fit>
        </Tabs>
        <SignIn><Fit w={68}>Iniciar sesión</Fit></SignIn>
      </TabBar>
      <Ribbon>
        <Clipboard /><GroupSep /><FontGroup /><GroupSep /><Paragraph /><GroupSep /><Styles /><GroupSep /><Editing /><GroupSep />
        <Collapse><svg width="8" height="5"><path d="M.5 4.500 4 1l3.500 3.500" fill="none" stroke="#666" strokeWidth="1.800" /></svg></Collapse>
      </Ribbon>
      <Document />
      <StatusBar />
      <Desktop />
    </Window>
  );
}
